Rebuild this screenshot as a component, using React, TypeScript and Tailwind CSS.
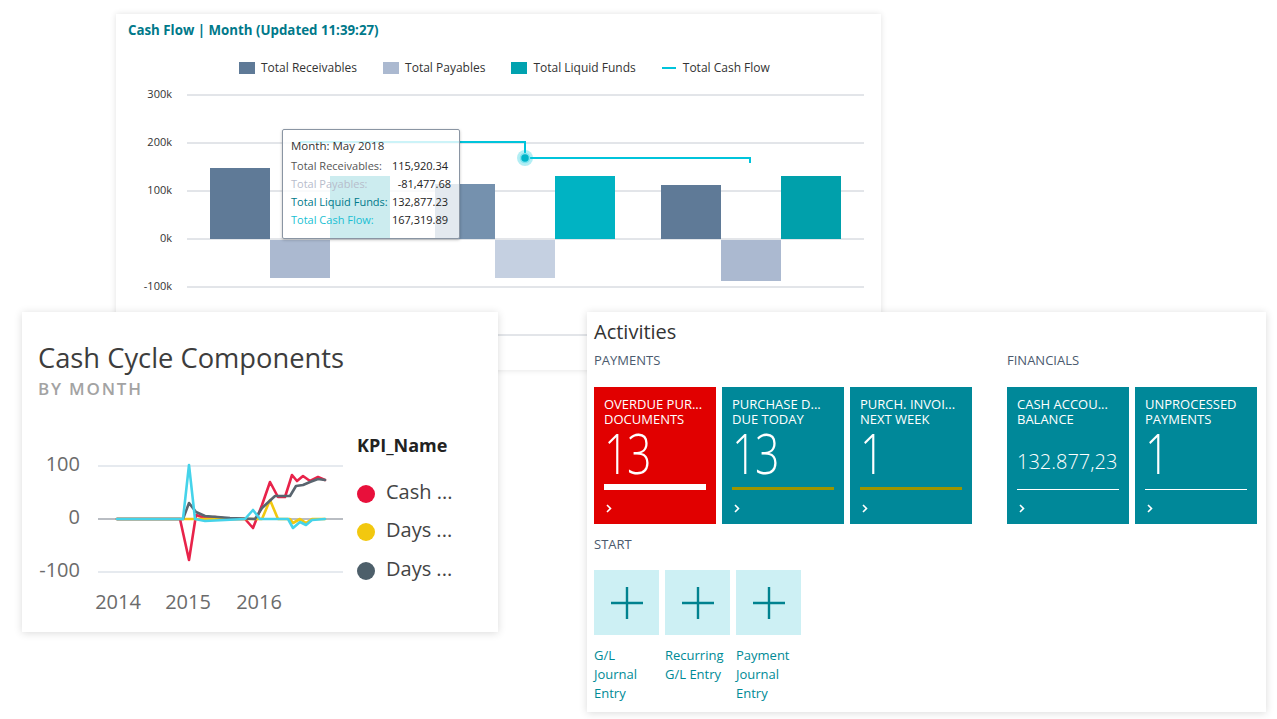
import React from "react"

const font = "font-['Open_Sans',sans-serif]"

const groups = [
  { x: 210, rec: 168, pay: 278, liq: 176, c: ["#5f7a97", "#abb9d0", "#00a2af"] },
  { x: 435, rec: 184, pay: 278, liq: 176, c: ["#7591ae", "#c5d0e1", "#00b3c3"] },
  { x: 661, rec: 185, pay: 281, liq: 176, c: ["#5f7a97", "#abb9d0", "#00a0ab"] },
]

const axis = [
  { label: "300k", y: 95 },
  { label: "200k", y: 143 },
  { label: "100k", y: 191 },
  { label: "0k", y: 239 },
  { label: "-100k", y: 287 },
  { label: "", y: 335 },
]

function Chevron() {
  return (
    <svg width="6" height="9" viewBox="0 0 6 9" className="block">
      <path d="M1 1 L4.5 4.5 L1 8" fill="none" stroke="white" strokeWidth="1.6" />
    </svg>
  )
}

function CashFlowCard() {
  return (
    <div className={`absolute left-[116px] top-[14px] w-[765px] h-[356px] bg-white shadow-[0_0_6px_rgba(0,0,0,0.12)] ${font}`}>
      <svg className="absolute inset-0" width="765" height="356" viewBox="116 14 765 356">
        {axis.map((a) => (
          <g key={a.y}>
            <line x1="187" x2="864" y1={a.y} y2={a.y} stroke="#c6cbd3" strokeWidth="1" />
            <text x="172" y={a.y} textAnchor="end" dominantBaseline="middle" fontSize="11" fill="#333" fontFamily="Open Sans, sans-serif">
              {a.label}
            </text>
          </g>
        ))}
        {groups.map((g) => (
          <g key={g.x}>
            <rect x={g.x} y={g.rec} width="60" height={239 - g.rec} fill={g.c[0]} />
            <rect x={g.x + 60} y="240" width="60" height={g.pay - 240} fill={g.c[1]} />
            <rect x={g.x + 120} y={g.liq} width="60" height={239 - g.liq} fill={g.c[2]} />
          </g>
        ))}
        <path d="M300 142 H525 V158 H750 V163" fill="none" stroke="#00c4db" strokeWidth="2" />
        <circle cx="525" cy="158" r="8" fill="#00c8dc" opacity="0.3" />
        <circle cx="525" cy="158" r="4.5" fill="#00b4c8" stroke="#7fe3ef" strokeWidth="1.5" />
      </svg>

      <div className="relative px-[12px] pt-[8px]">
        <div className="text-[13.3px] leading-[16px] font-bold text-[#00798a]">Cash Flow | Month (Updated 11:39:27)</div>
        <div className="mt-[22px] flex items-center gap-[26px] pl-[111px] text-[12px] leading-[16px] text-[#333]">
          <div className="flex items-center gap-[6px]">
            <span className="w-[16px] h-[12px] bg-[#5f7a97]" />
            <span>Total Receivables</span>
          </div>
          <div className="flex items-center gap-[6px]">
            <span className="w-[16px] h-[12px] bg-[#abb9d0]" />
            <span>Total Payables</span>
          </div>
          <div className="flex items-center gap-[6px]">
            <span className="w-[16px] h-[12px] bg-[#00a2af]" />
            <span>Total Liquid Funds</span>
          </div>
          <div className="flex items-center gap-[7px]">
            <span className="w-[14px] h-[2px] bg-[#00c4db]" />
            <span>Total Cash Flow</span>
          </div>
        </div>
      </div>

      <div className="absolute left-[166px] top-[115px] w-[178px] h-[110px] bg-white/80 border border-[#8a95a3] rounded-[2px] shadow-[0_1px_3px_rgba(0,0,0,0.25)] px-[8px] pt-[7px] text-[11px] leading-[18px] whitespace-nowrap">
        <div className="text-[#333] mb-[2px] text-[11.5px]">Month: May 2018</div>
        <div className="flex">
          <span className="w-[101px] text-[#555]">Total Receivables:</span>
          <span className="text-[#222]">115,920.34</span>
        </div>
        <div className="flex">
          <span className="w-[101px] text-[#b7bccb]">Total Payables:</span>
          <span className="text-[#222] pl-[6px]">-81,477.68</span>
        </div>
        <div className="flex">
          <span className="w-[101px] text-[#00798a]">Total Liquid Funds:</span>
          <span className="text-[#222]">132,877.23</span>
        </div>
        <div className="flex">
          <span className="w-[101px] text-[#19bfd3]">Total Cash Flow:</span>
          <span className="text-[#222]">167,319.89</span>
        </div>
      </div>
    </div>
  )
}

function CashCycleCard() {
  const t = { fontFamily: "Open Sans, sans-serif" }
  return (
    <div className={`absolute left-[22px] top-[312px] w-[476px] h-[320px] bg-white shadow-[0_1px_8px_rgba(0,0,0,0.15)] ${font}`}>
      <svg className="absolute inset-0" width="476" height="320" viewBox="22 312 476 320">
        <line x1="98" x2="343" y1="466" y2="466" stroke="#e6eaef" strokeWidth="2" />
        <line x1="98" x2="343" y1="519" y2="519" stroke="#b9bdc3" strokeWidth="2" />
        <line x1="98" x2="343" y1="572" y2="572" stroke="#e6eaef" strokeWidth="2" />
        <g fontSize="20" fill="#6b6b6b" style={t}>
          <text x="80" y="466" textAnchor="end" dominantBaseline="middle">100</text>
          <text x="80" y="519" textAnchor="end" dominantBaseline="middle">0</text>
          <text x="80" y="572" textAnchor="end" dominantBaseline="middle">-100</text>
          <text x="118" y="604" textAnchor="middle" dominantBaseline="middle">2014</text>
          <text x="188" y="604" textAnchor="middle" dominantBaseline="middle">2015</text>
          <text x="259" y="604" textAnchor="middle" dominantBaseline="middle">2016</text>
        </g>
        <g fill="none" strokeWidth="2.6" strokeLinejoin="round" strokeLinecap="round">
          <path stroke="#e8234a" d="M117 519 L180 519 L189 560 L196 515 L205 518 L215 517 L230 519 L245 519 L253 528 L262 505 L270 482 L278 497 L285 497 L292 475 L297 481 L303 476 L310 481 L318 477 L325 480" />
          <path stroke="#f2c80f" d="M117 519 L262 519 L270 500 L278 519 L290 519 L293 523 L300 519 L306 523 L312 519 L325 519" />
          <path stroke="#59656f" d="M117 519 L183 519 L189 503 L196 512 L205 516 L230 518 L255 519 L262 508 L275 496 L290 496 L296 486 L303 485 L310 482 L318 479 L325 480" />
          <path stroke="#45d3ea" d="M117 519 L183 519 L189 465 L195 519 L205 521 L245 519 L253 510 L260 519 L288 519 L293 528 L300 522 L306 525 L312 520 L325 519" />
        </g>
        <text x="357" y="447" dominantBaseline="middle" fontSize="18" fontWeight="700" fill="#222" style={t}>KPI_Name</text>
        <circle cx="366" cy="494" r="9" fill="#e8103b" />
        <circle cx="366" cy="532" r="9" fill="#f2c80f" />
        <circle cx="366" cy="571" r="9" fill="#4d5f6a" />
        <g fontSize="20" fill="#444" style={t}>
          <text x="386" y="494" dominantBaseline="middle">Cash ...</text>
          <text x="386" y="532" dominantBaseline="middle">Days ...</text>
          <text x="386" y="571" dominantBaseline="middle">Days ...</text>
        </g>
      </svg>
      <div className="relative pl-[16px] pt-[30px]">
        <div className="text-[27.3px] leading-[32px] text-[#3d3d3d]">Cash Cycle Components</div>
        <div className="mt-[5px] text-[17px] leading-[20px] tracking-[1.8px] font-semibold text-[#a3a3a3]">BY MONTH</div>
      </div>
    </div>
  )
}

type Tile = {
  title: [string, string]
  value: string
  red?: boolean
  bar: "white" | "olive" | "line"
  small?: boolean
}

function KpiTile({ tile }: { tile: Tile }) {
  return (
    <div className={`w-[122px] h-[137px] px-[10px] pt-[10px] text-white ${tile.red ? "bg-[#e10000]" : "bg-[#008899]"}`}>
      <div className="text-[13px] leading-[15px] uppercase whitespace-nowrap">
        <div>{tile.title[0]}</div>
        <div>{tile.title[1]}</div>
      </div>
      {tile.small ? (
        <div className="h-[50px] flex items-end pb-[3px] text-[20px] leading-[24px] font-light">{tile.value}</div>
      ) : (
        <div className="h-[50px] pt-[1px] flex items-center">
          <span className="origin-left scale-x-[0.78] text-[55px] leading-[40px] font-light tracking-[-2px]">{tile.value}</span>
        </div>
      )}
      <div className="mt-[7px] h-[6px] flex items-end">
        {tile.bar === "white" && <div className="w-full h-[6px] bg-white" />}
        {tile.bar === "olive" && <div className="w-full h-[3px] bg-[#9c9500]" />}
        {tile.bar === "line" && <div className="w-full h-[1px] bg-white" />}
      </div>
      <div className="mt-[14px] pl-[2px]">
        <Chevron />
      </div>
    </div>
  )
}

const payments: Tile[] = [
  { title: ["Overdue Pur...", "Documents"], value: "13", red: true, bar: "white" },
  { title: ["Purchase D...", "Due Today"], value: "13", bar: "olive" },
  { title: ["Purch. Invoi...", "Next Week"], value: "1", bar: "olive" },
]

const financials: Tile[] = [
  { title: ["Cash Accou...", "Balance"], value: "132.877,23", bar: "line", small: true },
  { title: ["Unprocessed", "Payments"], value: "1", bar: "line" },
]

const starts = [
  ["G/L", "Journal", "Entry"],
  ["Recurring", "G/L Entry"],
  ["Payment", "Journal", "Entry"],
]

function Plus() {
  return (
    <svg width="32" height="32" viewBox="0 0 32 32">
      <path d="M16 0 V32 M0 16 H32" stroke="#00828f" strokeWidth="2.4" />
    </svg>
  )
}

function ActivitiesCard() {
  return (
    <div className={`absolute left-[587px] top-[312px] w-[679px] h-[400px] bg-white shadow-[0_1px_8px_rgba(0,0,0,0.15)] px-[7px] pt-[8px] ${font}`}>
      <div className="text-[20px] leading-[24px] text-[#333]">Activities</div>
      <div className="mt-[8px] flex gap-[35px]">
        <div>
          <div className="text-[13px] leading-[16px] text-[#4b5a6e]">PAYMENTS</div>
          <div className="mt-[19px] flex gap-[6px]">
            {payments.map((t) => (
              <KpiTile key={t.title[0]} tile={t} />
            ))}
          </div>
        </div>
        <div>
          <div className="text-[13px] leading-[16px] text-[#4b5a6e]">FINANCIALS</div>
          <div className="mt-[19px] flex gap-[6px]">
            {financials.map((t) => (
              <KpiTile key={t.title[0]} tile={t} />
            ))}
          </div>
        </div>
      </div>
      <div className="mt-[12px] text-[13px] leading-[16px] text-[#4b5a6e]">START</div>
      <div className="mt-[18px] flex gap-[6px]">
        {starts.map((s) => (
          <div key={s.join(" ")} className="w-[65px]">
            <div className="w-[65px] h-[65px] bg-[#cdf0f4] flex items-center justify-center">
              <Plus />
            </div>
            <div className="mt-[11px] text-[13px] leading-[19px] text-[#008a96] whitespace-nowrap">
              {s.map((l) => (
                <div key={l}>{l}</div>
              ))}
            </div>
          </div>
        ))}
      </div>
    </div>
  )
}

export default function App() {
  return (
    <div className="relative w-[1277px] h-[719px] bg-white overflow-hidden">
      <CashFlowCard />
      <CashCycleCard />
      <ActivitiesCard />
    </div>
  )
}
